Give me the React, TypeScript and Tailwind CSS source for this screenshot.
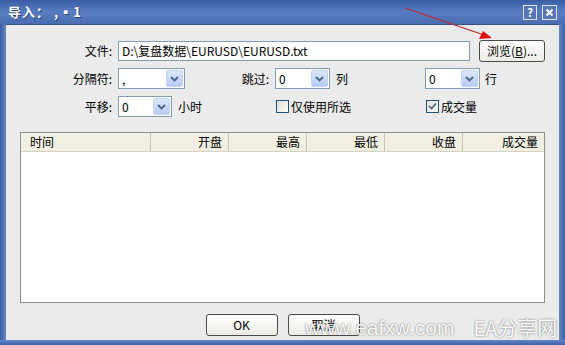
import React from "react";

const FONT = { fontFamily: '"Noto Sans CJK SC", "Liberation Sans", sans-serif' };

function Combo({ value, w }: { value: string; w: string }) {
  return (
    <div className={`${w} h-[21px] bg-white border border-[#7f9db9] flex items-center relative`}>
      <span className="pl-[3px] text-[12px] leading-none text-black">{value}</span>
      <div className="absolute right-[1px] top-[1px] bottom-[1px] w-[17px] rounded-[2px] bg-gradient-to-b from-[#dbe6fb] to-[#b7cbf2] border border-[#c3d3f5] flex items-center justify-center">
        <svg width="9" height="6" viewBox="0 0 9 6">
          <path d="M1 1 L4.5 4.5 L8 1" fill="none" stroke="#4d6185" strokeWidth="1.8" />
        </svg>
      </div>
    </div>
  );
}

function Check({ checked }: { checked?: boolean }) {
  return (
    <div className="w-[13px] h-[13px] border border-[#1c5180] bg-gradient-to-br from-[#dcdcd7] to-white flex items-center justify-center">
      {checked && (
        <svg width="9" height="9" viewBox="0 0 9 9">
          <path d="M1 4 L3.5 6.5 L8 1.5" fill="none" stroke="#4a5a7a" strokeWidth="1.6" />
        </svg>
      )}
    </div>
  );
}

function Btn({ children, w }: { children: React.ReactNode; w: string }) {
  return (
    <div className={`${w} h-[22px] rounded-[3px] border border-[#4a4a4a] bg-gradient-to-b from-white to-[#ecebe6] flex items-center justify-center text-[12px] text-black`}>
      {children}
    </div>
  );
}

export default function App() {
  const cols = [
    { t: "开盘", w: "w-[78px]" },
    { t: "最高", w: "w-[78px]" },
    { t: "最低", w: "w-[78px]" },
    { t: "收盘", w: "w-[78px]" },
  ];
  return (
    <div className="w-[565px] h-[345px] relative bg-white overflow-hidden" style={FONT}>
      <div className="w-[565px] h-[345px] flex flex-col">
        {/* Title bar */}
        <div className="h-[24px] bg-gradient-to-b from-[#3a5ea6] via-[#5a7dc2] to-[#4a6cb1] flex items-center pl-[8px] pr-[8px]">
          <span className="text-white text-[13px] font-bold tracking-[1px] [text-shadow:1px_1px_0_#23417a]">导入： ,▪1</span>
          <div className="flex-1" />
          <div className="w-[14px] h-[15px] border border-white/80 bg-[#5676b8] flex items-center justify-center text-white text-[11px] font-bold leading-none">?</div>
          <div className="w-[15px] h-[15px] ml-[5px] border border-white/80 bg-[#5676b8] flex items-center justify-center">
            <svg width="9" height="9" viewBox="0 0 9 9">
              <path d="M1.5 1.5 L7.5 7.5 M7.5 1.5 L1.5 7.5" stroke="white" strokeWidth="2" />
            </svg>
          </div>
        </div>
        {/* Body */}
        <div className="flex-1 flex bg-[#4f70b3]">
          <div className="w-[6px] bg-gradient-to-r from-[#3a5ea6] to-[#6787c6]" />
          <div className="flex-1 flex flex-col bg-[#ebebeb] border-t border-[#33518c]">
            <div className="flex-1 flex flex-col text-[12px] text-black">
              {/* Row 1 */}
              <div className="flex items-center mt-[15px] h-[21px]">
                <div className="w-[106px] text-right">文件:</div>
                <div className="ml-[6px] w-[352px] h-[20px] bg-white border border-[#7f9db9] flex items-center pl-[3px]">D:\复盘数据\EURUSD\EURUSD.txt</div>
                <div className="ml-[9px]"><Btn w="w-[66px]">浏览(<span className="underline">B</span>)...</Btn></div>
              </div>
              {/* Row 2 */}
              <div className="flex items-center mt-[7px] h-[21px]">
                <div className="w-[106px] text-right">分隔符:</div>
                <div className="ml-[6px]"><Combo value="," w="w-[67px]" /></div>
                <div className="w-[84px] text-right">跳过:</div>
                <div className="ml-[6px]"><Combo value="0" w="w-[55px]" /></div>
                <div className="w-[95px] pl-[6px]">列</div>
                <Combo value="0" w="w-[55px]" />
                <div className="pl-[5px]">行</div>
              </div>
              {/* Row 3 */}
              <div className="flex items-center mt-[7px] h-[21px]">
                <div className="w-[106px] text-right">平移:</div>
                <div className="ml-[6px]"><Combo value="0" w="w-[54px]" /></div>
                <div className="w-[104px] pl-[6px]">小时</div>
                <Check />
                <div className="w-[137px] pl-[2px]">仅使用所选</div>
                <Check checked />
                <div className="pl-[2px]">成交量</div>
              </div>
              {/* List */}
              <div className="ml-[14px] mt-[15px] w-[525px] h-[171px] bg-white border border-[#8e8f8f] flex flex-col">
                <div className="h-[19px] bg-[#f1efe2] border-b border-[#d6d3c4] flex items-center">
                  <div className="w-[130px] h-full flex items-center pl-[9px] border-r border-[#cbc7b8]">时间</div>
                  {cols.map((c) => (
                    <div key={c.t} className={`${c.w} h-full flex items-center justify-end pr-[6px] border-r border-[#cbc7b8]`}>{c.t}</div>
                  ))}
                  <div className="flex-1 h-full flex items-center justify-end pr-[6px]">成交量</div>
                </div>
              </div>
              {/* Buttons */}
              <div className="flex justify-center gap-[10px] mt-[11px]">
                <Btn w="w-[72px]">OK</Btn>
                <Btn w="w-[72px]">取消</Btn>
              </div>
            </div>
          </div>
          <div className="w-[6px] bg-gradient-to-l from-[#3a5ea6] to-[#6787c6]" />
        </div>
        <div className="h-[5px] bg-gradient-to-b from-[#6787c6] to-[#3a5ea6]" />
      </div>
      {/* Annotation arrow */}
      <svg className="absolute left-0 top-0 pointer-events-none" width="565" height="345">
        <line x1="405" y1="8" x2="484" y2="35" stroke="#c0282d" strokeWidth="1.2" />
        <polygon points="492,38 479,39 483,31" fill="#e01010" />
      </svg>
      {/* Watermark */}
      <div className="absolute left-[305px] top-[317px] flex items-end whitespace-nowrap text-white/95 leading-none [text-shadow:0_0_2px_rgba(70,70,70,0.8)]">
        <span className="text-[21px]" style={{ fontFamily: '"Liberation Sans", sans-serif' }}>www.eafxw.com</span>
        <span className="ml-[19px] text-[20px]" style={{ fontFamily: '"Noto Sans CJK SC", "Liberation Sans", sans-serif' }}>EA分享网</span>
      </div>
    </div>
  );
}
